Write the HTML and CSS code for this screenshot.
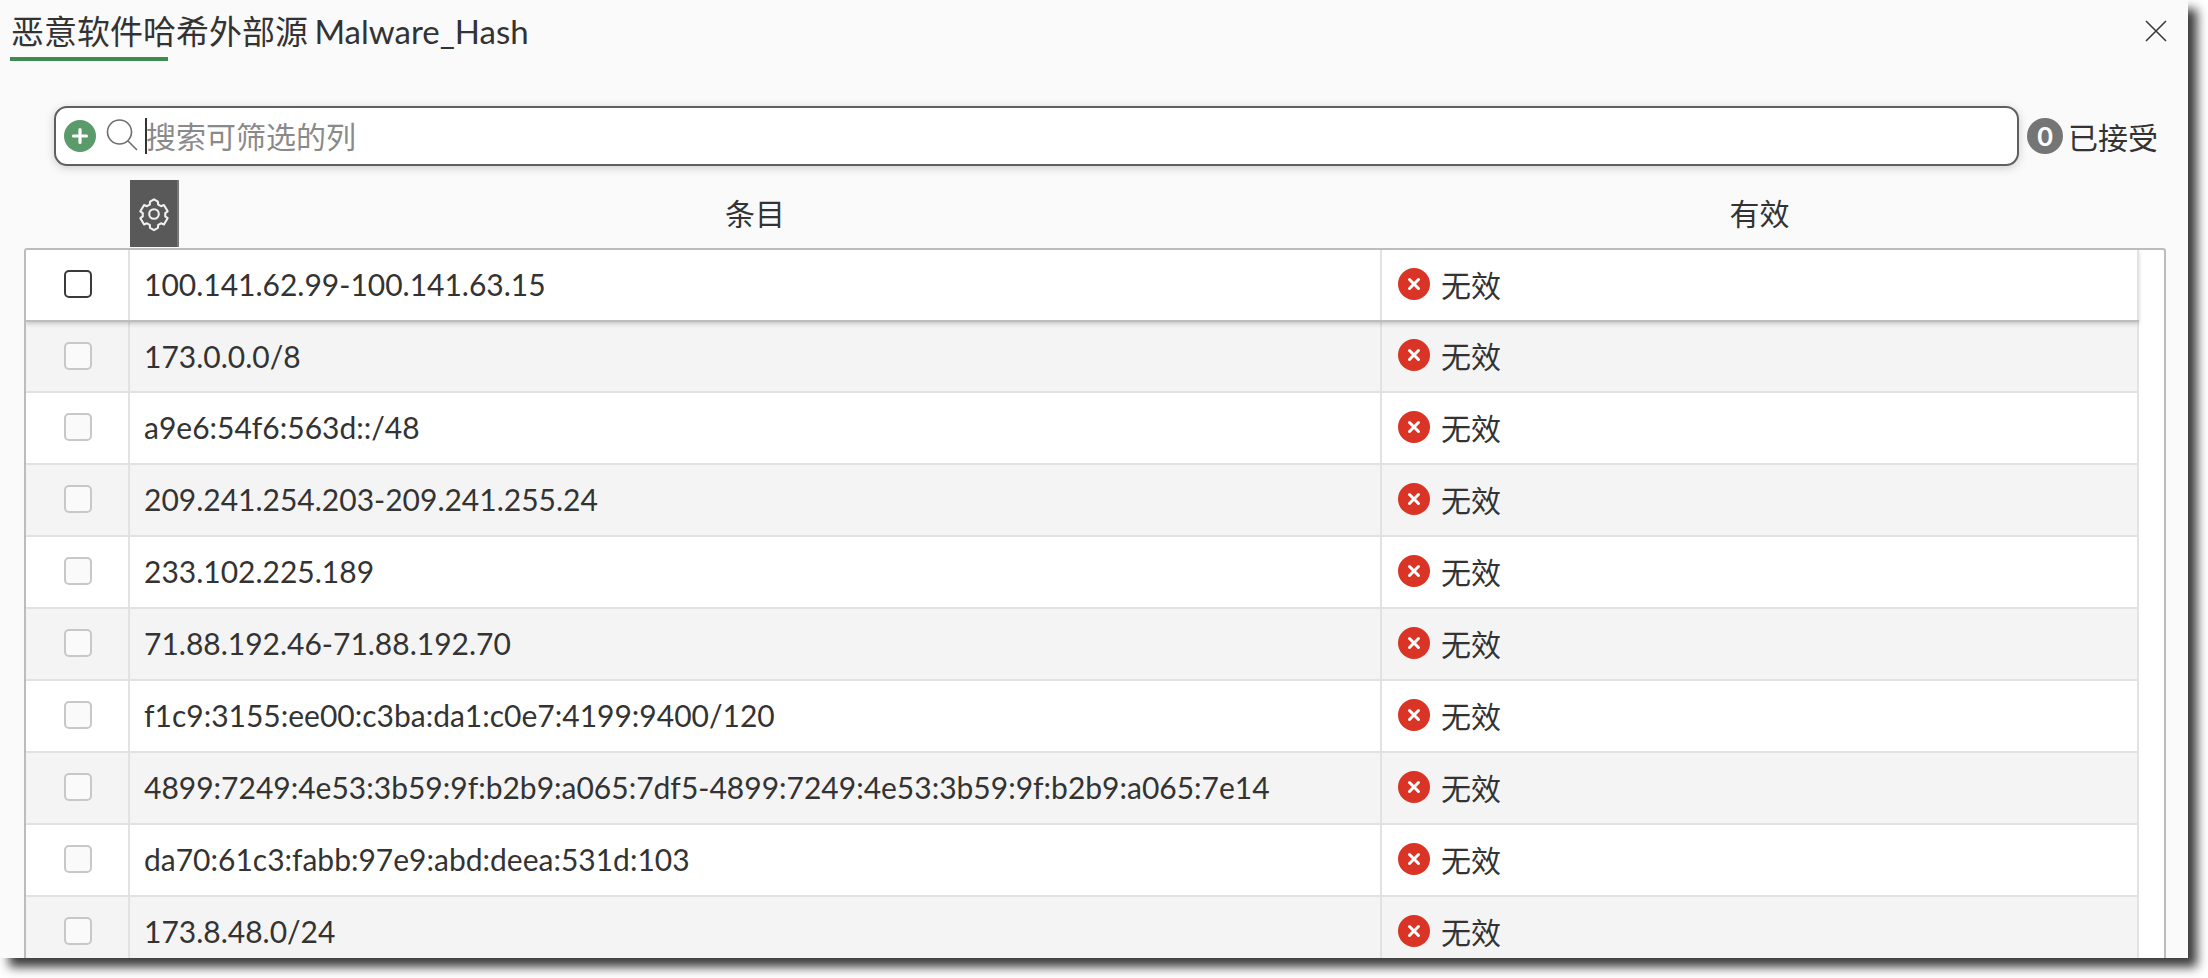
FILE: index.html
```html
<!DOCTYPE html>
<html lang="zh">
<head>
<meta charset="utf-8">
<title>恶意软件哈希外部源 Malware_Hash</title>
<link rel="stylesheet" href="styles.css">
</head>
<body>
<main class="panel">
  <header class="title-bar">
    <h1 class="title">恶意软件哈希外部源 Malware_Hash</h1>
    <button class="close" aria-label="关闭">
      <svg viewBox="0 0 22 22" width="22" height="22"><path d="M1 1L21 21M21 1L1 21" stroke="#3a3a3a" stroke-width="1.6" fill="none"/></svg>
    </button>
  </header>
  <div class="search-row">
    <div class="search">
      <svg class="plus" viewBox="0 0 32 32" width="32" height="32"><circle cx="16" cy="16" r="16" fill="#5b9a6b"/><path d="M16 9.500V22.500M9.500 16H22.500" stroke="#fff" stroke-width="3.200" stroke-linecap="round"/></svg>
      <svg class="lens" viewBox="0 0 32 32" width="32" height="32"><circle cx="13.500" cy="13" r="12" stroke="#6e6e6e" stroke-width="1.600" fill="none"/><path d="M22 22L31 31" stroke="#6e6e6e" stroke-width="1.600" fill="none"/></svg>
      <span class="caret"></span>
      <span class="placeholder">搜索可筛选的列</span>
    </div>
    <div class="accepted"><span class="badge">0</span><span>已接受</span></div>
  </div>
  <div class="thead">
    <div class="th-check"></div>
    <div class="th-gear">
      <svg viewBox="0 0 24 24" width="36" height="36" fill="none" stroke="#f0f0f0" stroke-width="1.400" stroke-linejoin="round"><path d="M12 2.200l2.600 1.500.2 2 1.900 1.100 1.900-.8 2.500 4.200-1.600 1.200v2.200l1.600 1.200-2.500 4.200-1.900-.8-1.900 1.100-.2 2-2.600 1.500-2.600-1.500-.2-2-1.900-1.100-1.900.8-2.500-4.200 1.600-1.200v-2.200l-1.600-1.200 2.500-4.200 1.900.8 1.900-1.100.2-2z"/><circle cx="12" cy="12" r="3.200"/></svg>
    </div>
    <div class="th th-entry">条目</div>
    <div class="th th-valid">有效</div>
  </div>
  <div class="table">
    <div class="row row-active"><div class="c-check"><span class="check check-dark"></span></div><div class="c-entry">100.141.62.99-100.141.63.15</div><div class="c-valid"><svg class="err" viewBox="0 0 32 32" width="32" height="32"><circle cx="16" cy="16" r="16" fill="#d93426"/><path d="M11.500 11.500L20.500 20.500M20.500 11.500L11.500 20.500" stroke="#fff" stroke-width="3" stroke-linecap="round"/></svg>无效</div></div>
    <div class="row"><div class="c-check"><span class="check"></span></div><div class="c-entry">173.0.0.0/8</div><div class="c-valid"><svg class="err" viewBox="0 0 32 32" width="32" height="32"><circle cx="16" cy="16" r="16" fill="#d93426"/><path d="M11.500 11.500L20.500 20.500M20.500 11.500L11.500 20.500" stroke="#fff" stroke-width="3" stroke-linecap="round"/></svg>无效</div></div>
    <div class="row"><div class="c-check"><span class="check"></span></div><div class="c-entry">a9e6:54f6:563d::/48</div><div class="c-valid"><svg class="err" viewBox="0 0 32 32" width="32" height="32"><circle cx="16" cy="16" r="16" fill="#d93426"/><path d="M11.500 11.500L20.500 20.500M20.500 11.500L11.500 20.500" stroke="#fff" stroke-width="3" stroke-linecap="round"/></svg>无效</div></div>
    <div class="row"><div class="c-check"><span class="check"></span></div><div class="c-entry">209.241.254.203-209.241.255.24</div><div class="c-valid"><svg class="err" viewBox="0 0 32 32" width="32" height="32"><circle cx="16" cy="16" r="16" fill="#d93426"/><path d="M11.500 11.500L20.500 20.500M20.500 11.500L11.500 20.500" stroke="#fff" stroke-width="3" stroke-linecap="round"/></svg>无效</div></div>
    <div class="row"><div class="c-check"><span class="check"></span></div><div class="c-entry">233.102.225.189</div><div class="c-valid"><svg class="err" viewBox="0 0 32 32" width="32" height="32"><circle cx="16" cy="16" r="16" fill="#d93426"/><path d="M11.500 11.500L20.500 20.500M20.500 11.500L11.500 20.500" stroke="#fff" stroke-width="3" stroke-linecap="round"/></svg>无效</div></div>
    <div class="row"><div class="c-check"><span class="check"></span></div><div class="c-entry">71.88.192.46-71.88.192.70</div><div class="c-valid"><svg class="err" viewBox="0 0 32 32" width="32" height="32"><circle cx="16" cy="16" r="16" fill="#d93426"/><path d="M11.500 11.500L20.500 20.500M20.500 11.500L11.500 20.500" stroke="#fff" stroke-width="3" stroke-linecap="round"/></svg>无效</div></div>
    <div class="row"><div class="c-check"><span class="check"></span></div><div class="c-entry">f1c9:3155:ee00:c3ba:da1:c0e7:4199:9400/120</div><div class="c-valid"><svg class="err" viewBox="0 0 32 32" width="32" height="32"><circle cx="16" cy="16" r="16" fill="#d93426"/><path d="M11.500 11.500L20.500 20.500M20.500 11.500L11.500 20.500" stroke="#fff" stroke-width="3" stroke-linecap="round"/></svg>无效</div></div>
    <div class="row"><div class="c-check"><span class="check"></span></div><div class="c-entry">4899:7249:4e53:3b59:9f:b2b9:a065:7df5-4899:7249:4e53:3b59:9f:b2b9:a065:7e14</div><div class="c-valid"><svg class="err" viewBox="0 0 32 32" width="32" height="32"><circle cx="16" cy="16" r="16" fill="#d93426"/><path d="M11.500 11.500L20.500 20.500M20.500 11.500L11.500 20.500" stroke="#fff" stroke-width="3" stroke-linecap="round"/></svg>无效</div></div>
    <div class="row"><div class="c-check"><span class="check"></span></div><div class="c-entry">da70:61c3:fabb:97e9:abd:deea:531d:103</div><div class="c-valid"><svg class="err" viewBox="0 0 32 32" width="32" height="32"><circle cx="16" cy="16" r="16" fill="#d93426"/><path d="M11.500 11.500L20.500 20.500M20.500 11.500L11.500 20.500" stroke="#fff" stroke-width="3" stroke-linecap="round"/></svg>无效</div></div>
    <div class="row"><div class="c-check"><span class="check"></span></div><div class="c-entry">173.8.48.0/24</div><div class="c-valid"><svg class="err" viewBox="0 0 32 32" width="32" height="32"><circle cx="16" cy="16" r="16" fill="#d93426"/><path d="M11.500 11.500L20.500 20.500M20.500 11.500L11.500 20.500" stroke="#fff" stroke-width="3" stroke-linecap="round"/></svg>无效</div></div>
  </div>
</main>
</body>
</html>
```
FILE: styles.css
```css
* { box-sizing: border-box; }
html, body { margin: 0; height: 978px; overflow: hidden; background: #fff; }
body {
  font-family: Lato, "Noto Sans CJK SC", sans-serif;
  color: #333;
  font-size: 30px;
}
.panel {
  width: 2188px;
  height: 958px;
  background: #fafafa;
  box-shadow: 9px 9px 10px #3c3c3c;
  overflow: hidden;
  display: flex;
  flex-direction: column;
}
.title-bar {
  height: 106px;
  padding: 8px 21px 0 10px;
  display: flex;
  justify-content: space-between;
  align-items: flex-start;
  flex: none;
}
.title {
  margin: 0;
  font-weight: 400;
  font-size: 33px;
  word-spacing: -2px;
  line-height: 47px;
  padding: 0 0 0 1px;
  position: relative;
  color: #333;
}
.title::after {
  content: "";
  position: absolute;
  left: 0;
  top: 49px;
  width: 158px;
  height: 4px;
  background: #3f8a50;
}
.close {
  border: 0;
  background: none;
  padding: 0;
  margin: 12px 0 0;
  height: 22px;
  width: 22px;
  display: block;
}
.search-row {
  height: 59px;
  padding-left: 54px;
  display: flex;
  align-items: center;
  flex: none;
}
.search {
  width: 1965px;
  height: 60px;
  background: #fff;
  border: 2px solid #5f5f5f;
  border-radius: 13px;
  box-shadow: 0 2px 10px rgba(0,0,0,.18);
  display: flex;
  align-items: center;
  padding-left: 8px;
}
.plus { flex: none; }
.lens { flex: none; margin-left: 10px; margin-top: -2px; }
.caret { width: 2px; height: 36px; background: #333; margin-left: 7px; flex: none; }
.placeholder { color: #8a8a8a; line-height: 36px; font-size: 30px; margin-left: -1px; }
.accepted {
  display: flex;
  align-items: center;
  margin-left: 8px;
  gap: 5px;
}
.badge {
  width: 36px;
  height: 36px;
  border-radius: 50%;
  background: #757575;
  color: #fff;
  font-weight: 700;
  font-size: 27px;
  line-height: 36px;
  text-align: center;
}
.thead {
  display: flex;
  height: 68px;
  margin: 15px 0 0 25px;
  flex: none;
}
.th-check { width: 105px; flex: none; }
.th-gear {
  width: 49px;
  margin-right: -49px;
  flex: none;
  background: #595959;
  display: flex;
  align-items: center;
  justify-content: center;
  border-right: 2px solid #777;
  height: 67px;
}
.th {
  display: flex;
  align-items: center;
  justify-content: center;
  padding-bottom: 5px;
  color: #333;
}
.th-entry { width: 1250px; flex: none; }
.th-valid { width: 759px; flex: none; }
.table {
  margin-left: 24px;
  width: 2142px;
  flex: 1;
  min-height: 0;
  background: #fff;
  border: 2px solid #bcbcbc;
  border-bottom: 0;
  border-radius: 3px 3px 0 0;
  overflow: hidden;
  padding-right: 25px;
}
.row {
  display: flex;
  height: 72px;
  border-bottom: 2px solid #e2e2e2;
  background: #fff;
}
.row:nth-child(even) { background: #f4f4f4; }
.row-active {
  height: 72px;
  border-bottom: 2px solid #bdbdbd;
  box-shadow: 0 2px 4px rgba(0,0,0,.18);
  position: relative;
}
.row-active + .row { height: 71px; }
.c-check, .c-entry, .c-valid {
  display: flex;
  align-items: center;
  height: 100%;
  padding-bottom: 2px;
  border-right: 2px solid #e2e2e2;
}
.c-check { width: 104px; flex: none; justify-content: center; padding-left: 2px; }
.c-entry { width: 1252px; flex: none; padding-left: 14px; }
.c-valid { flex: 1; padding-left: 16px; padding-bottom: 3px; }
.err { margin-right: 11px; flex: none; }
.check {
  width: 28px;
  height: 28px;
  border: 2px solid #c8c8c8;
  border-radius: 5px;
  background: #fafafa;
}
.check-dark { border-color: #3a3a3a; background: #fff; }
```
